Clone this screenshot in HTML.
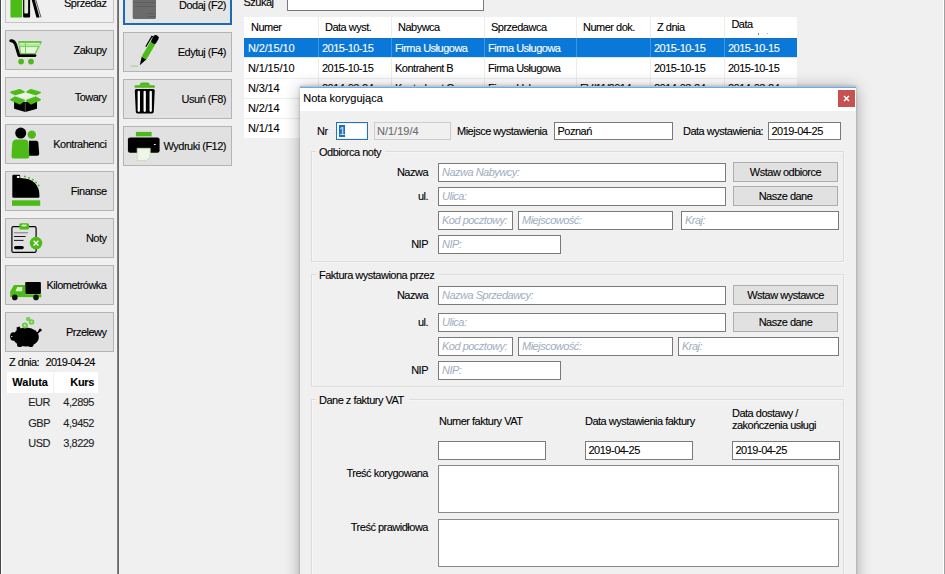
<!DOCTYPE html>
<html><head><meta charset="utf-8"><style>
html,body{margin:0;padding:0;}
body{width:945px;height:574px;overflow:hidden;position:relative;background:#f0f0f0;font-family:"Liberation Sans",sans-serif;}
.t{position:absolute;white-space:nowrap;-webkit-text-stroke:0.1px currentColor;}
.r{position:absolute;box-sizing:border-box;}
.ic{position:absolute;left:0;top:0;overflow:visible;}
</style></head><body>
<div class="r" style="left:0px;top:0px;width:1px;height:574px;background:#46494f;"></div>
<div class="r" style="left:1px;top:0px;width:1px;height:574px;background:#ffffff;"></div>
<div class="r" style="left:943px;top:0px;width:1px;height:574px;background:#ffffff;"></div>
<div class="r" style="left:944px;top:0px;width:1px;height:574px;background:#a0a0a0;"></div>
<div class="r" style="left:117px;top:0px;width:1px;height:574px;background:#7e7e7e;"></div>
<div class="r" style="left:118px;top:0px;width:1px;height:574px;background:#6a6a6a;"></div>
<div class="r" style="left:5px;top:-17px;width:109px;height:40px;background:#efefef;border:1px solid #c4c4c4;"></div>
<div class="t" style="top:-1.61px;font-size:11px;line-height:11px;letter-spacing:-0.5px;color:#000;right:838.5px;text-align:right;">Sprzedaż</div>
<div class="r" style="left:5px;top:30px;width:109px;height:40px;background:#e1e1e1;border:1px solid #b4b4b4;"></div>
<div class="t" style="top:44.69px;font-size:11px;line-height:11px;letter-spacing:-0.5px;color:#000;right:838.5px;text-align:right;">Zakupy</div>
<div class="r" style="left:5px;top:77px;width:109px;height:40px;background:#e1e1e1;border:1px solid #b4b4b4;"></div>
<div class="t" style="top:91.69px;font-size:11px;line-height:11px;letter-spacing:-0.5px;color:#000;right:838.5px;text-align:right;">Towary</div>
<div class="r" style="left:5px;top:124px;width:109px;height:40px;background:#e1e1e1;border:1px solid #b4b4b4;"></div>
<div class="t" style="top:138.69px;font-size:11px;line-height:11px;letter-spacing:-0.5px;color:#000;right:838.5px;text-align:right;">Kontrahenci</div>
<div class="r" style="left:5px;top:171px;width:109px;height:40px;background:#e1e1e1;border:1px solid #b4b4b4;"></div>
<div class="t" style="top:185.69px;font-size:11px;line-height:11px;letter-spacing:-0.5px;color:#000;right:838.5px;text-align:right;">Finanse</div>
<div class="r" style="left:5px;top:218px;width:109px;height:40px;background:#e1e1e1;border:1px solid #b4b4b4;"></div>
<div class="t" style="top:232.69px;font-size:11px;line-height:11px;letter-spacing:-0.5px;color:#000;right:838.5px;text-align:right;">Noty</div>
<div class="r" style="left:5px;top:265px;width:109px;height:40px;background:#e1e1e1;border:1px solid #b4b4b4;"></div>
<div class="t" style="top:279.69px;font-size:11px;line-height:11px;letter-spacing:-0.5px;color:#000;right:838.5px;text-align:right;">Kilometrówka</div>
<div class="r" style="left:5px;top:312px;width:109px;height:40px;background:#e1e1e1;border:1px solid #b4b4b4;"></div>
<div class="t" style="top:326.69px;font-size:11px;line-height:11px;letter-spacing:-0.5px;color:#000;right:838.5px;text-align:right;">Przelewy</div>
<div class="r" style="left:123px;top:-16px;width:109px;height:41px;background:#e5e5e5;border:1px solid #2568ad;border-width:2px;box-shadow:inset 0 0 0 1px #cfe8fb;"></div>
<div class="t" style="top:-0.31px;font-size:11px;line-height:11px;letter-spacing:-0.5px;color:#000;right:719px;text-align:right;">Dodaj (F2)</div>
<div class="r" style="left:123px;top:32px;width:109px;height:40px;background:#e1e1e1;border:1px solid #b4b4b4;"></div>
<div class="t" style="top:46.69px;font-size:11px;line-height:11px;letter-spacing:-0.5px;color:#000;right:719px;text-align:right;">Edytuj (F4)</div>
<div class="r" style="left:123px;top:79px;width:109px;height:40px;background:#e1e1e1;border:1px solid #b4b4b4;"></div>
<div class="t" style="top:93.69px;font-size:11px;line-height:11px;letter-spacing:-0.5px;color:#000;right:719px;text-align:right;">Usuń (F8)</div>
<div class="r" style="left:123px;top:126px;width:109px;height:40px;background:#e1e1e1;border:1px solid #b4b4b4;"></div>
<div class="t" style="top:140.69px;font-size:11px;line-height:11px;letter-spacing:-0.5px;color:#000;right:719px;text-align:right;">Wydruki (F12)</div>
<div class="t" style="top:356.69px;font-size:11px;line-height:11px;letter-spacing:-0.5px;color:#000;left:9px;">Z dnia:</div>
<div class="t" style="top:356.69px;font-size:11px;line-height:11px;letter-spacing:-0.7px;color:#000;left:45.5px;">2019-04-24</div>
<div class="r" style="left:7px;top:372px;width:91px;height:21px;background:#ffffff;"></div>
<div class="r" style="left:53px;top:372px;width:1px;height:21px;background:#f0f0f0;"></div>
<div class="t" style="top:377.19px;font-size:11px;line-height:11px;letter-spacing:0px;color:#000;font-weight:bold;left:12.3px;">Waluta</div>
<div class="t" style="top:377.19px;font-size:11px;line-height:11px;letter-spacing:-0.35px;color:#000;font-weight:bold;right:851px;text-align:right;">Kurs</div>
<div class="t" style="top:397.29px;font-size:11px;line-height:11px;letter-spacing:-0.5px;color:#222;right:895px;text-align:right;">EUR</div>
<div class="t" style="top:397.29px;font-size:11px;line-height:11px;letter-spacing:-0.5px;color:#222;right:851px;text-align:right;">4,2895</div>
<div class="t" style="top:417.59px;font-size:11px;line-height:11px;letter-spacing:-0.5px;color:#222;right:895px;text-align:right;">GBP</div>
<div class="t" style="top:417.59px;font-size:11px;line-height:11px;letter-spacing:-0.5px;color:#222;right:851px;text-align:right;">4,9452</div>
<div class="t" style="top:437.89px;font-size:11px;line-height:11px;letter-spacing:-0.5px;color:#222;right:895px;text-align:right;">USD</div>
<div class="t" style="top:437.89px;font-size:11px;line-height:11px;letter-spacing:-0.5px;color:#222;right:851px;text-align:right;">3,8229</div>
<div class="t" style="top:-3.51px;font-size:11px;line-height:11px;letter-spacing:-0.5px;color:#000;left:243.5px;">Szukaj</div>
<div class="r" style="left:287px;top:-10px;width:197px;height:21px;background:#ffffff;border:1px solid #7a7a7a;"></div>
<div class="r" style="left:244px;top:17px;width:553px;height:121px;background:#ffffff;"></div>
<div class="r" style="left:244px;top:38px;width:553px;height:19px;background:#0a78d8;"></div>
<div class="r" style="left:244px;top:38px;width:553px;height:1px;background:#1a6fc0;"></div>
<div class="r" style="left:244px;top:57px;width:553px;height:1px;background:#d6eafb;"></div>
<div class="r" style="left:244px;top:78px;width:553px;height:1px;background:#ececec;"></div>
<div class="r" style="left:244px;top:98px;width:553px;height:1px;background:#ececec;"></div>
<div class="r" style="left:244px;top:118px;width:553px;height:1px;background:#ececec;"></div>
<div class="r" style="left:318px;top:17px;width:1px;height:121px;background:#ececec;"></div>
<div class="r" style="left:318px;top:38px;width:1px;height:19px;background:#3d96e0;"></div>
<div class="r" style="left:391px;top:17px;width:1px;height:121px;background:#ececec;"></div>
<div class="r" style="left:391px;top:38px;width:1px;height:19px;background:#3d96e0;"></div>
<div class="r" style="left:484px;top:17px;width:1px;height:121px;background:#ececec;"></div>
<div class="r" style="left:484px;top:38px;width:1px;height:19px;background:#3d96e0;"></div>
<div class="r" style="left:576px;top:17px;width:1px;height:121px;background:#ececec;"></div>
<div class="r" style="left:576px;top:38px;width:1px;height:19px;background:#3d96e0;"></div>
<div class="r" style="left:650px;top:17px;width:1px;height:121px;background:#ececec;"></div>
<div class="r" style="left:650px;top:38px;width:1px;height:19px;background:#3d96e0;"></div>
<div class="r" style="left:724px;top:17px;width:1px;height:121px;background:#ececec;"></div>
<div class="r" style="left:724px;top:38px;width:1px;height:19px;background:#3d96e0;"></div>
<div class="t" style="top:21.89px;font-size:11px;line-height:11px;letter-spacing:-0.5px;color:#000;left:251px;">Numer</div>
<div class="t" style="top:21.89px;font-size:11px;line-height:11px;letter-spacing:-0.5px;color:#000;left:325px;">Data wyst.</div>
<div class="t" style="top:21.89px;font-size:11px;line-height:11px;letter-spacing:-0.5px;color:#000;left:398px;">Nabywca</div>
<div class="t" style="top:21.89px;font-size:11px;line-height:11px;letter-spacing:-0.5px;color:#000;left:491px;">Sprzedawca</div>
<div class="t" style="top:21.89px;font-size:11px;line-height:11px;letter-spacing:-0.5px;color:#000;left:583px;">Numer dok.</div>
<div class="t" style="top:21.89px;font-size:11px;line-height:11px;letter-spacing:-0.5px;color:#000;left:657px;">Z dnia</div>
<div class="t" style="top:19.29px;font-size:11px;line-height:11px;letter-spacing:-0.5px;color:#000;left:731.4px;">Data</div>
<div class="r" style="left:758px;top:33px;width:1px;height:2px;background:#888888;"></div>
<div class="r" style="left:767px;top:33px;width:1px;height:1px;background:#aaaaaa;"></div>
<div class="t" style="top:42.59px;font-size:11px;line-height:11px;letter-spacing:-0.15px;color:#ffffff;left:248px;">N/2/15/10</div>
<div class="t" style="top:42.59px;font-size:11px;line-height:11px;letter-spacing:-0.5px;color:#ffffff;left:322px;">2015-10-15</div>
<div class="t" style="top:42.59px;font-size:11px;line-height:11px;letter-spacing:-0.5px;color:#ffffff;left:395px;">Firma Usługowa</div>
<div class="t" style="top:42.59px;font-size:11px;line-height:11px;letter-spacing:-0.5px;color:#ffffff;left:488px;">Firma Usługowa</div>
<div class="t" style="top:42.59px;font-size:11px;line-height:11px;letter-spacing:-0.5px;color:#ffffff;left:654px;">2015-10-15</div>
<div class="t" style="top:42.59px;font-size:11px;line-height:11px;letter-spacing:-0.5px;color:#ffffff;left:728px;">2015-10-15</div>
<div class="t" style="top:62.79px;font-size:11px;line-height:11px;letter-spacing:-0.15px;color:#000;left:248px;">N/1/15/10</div>
<div class="t" style="top:62.79px;font-size:11px;line-height:11px;letter-spacing:-0.5px;color:#000;left:322px;">2015-10-15</div>
<div class="t" style="top:62.79px;font-size:11px;line-height:11px;letter-spacing:-0.5px;color:#000;left:395px;">Kontrahent B</div>
<div class="t" style="top:62.79px;font-size:11px;line-height:11px;letter-spacing:-0.5px;color:#000;left:488px;">Firma Usługowa</div>
<div class="t" style="top:62.79px;font-size:11px;line-height:11px;letter-spacing:-0.5px;color:#000;left:654px;">2015-10-15</div>
<div class="t" style="top:62.79px;font-size:11px;line-height:11px;letter-spacing:-0.5px;color:#000;left:728px;">2015-10-15</div>
<div class="t" style="top:82.99px;font-size:11px;line-height:11px;letter-spacing:-0.15px;color:#000;left:248px;">N/3/14</div>
<div class="t" style="top:82.99px;font-size:11px;line-height:11px;letter-spacing:-0.5px;color:#000;left:322px;">2014-03-24</div>
<div class="t" style="top:82.99px;font-size:11px;line-height:11px;letter-spacing:-0.5px;color:#000;left:395px;">Kontrahent C</div>
<div class="t" style="top:82.99px;font-size:11px;line-height:11px;letter-spacing:-0.5px;color:#000;left:488px;">Firma Usługowa</div>
<div class="t" style="top:82.99px;font-size:11px;line-height:11px;letter-spacing:-0.5px;color:#000;left:580px;">FV/11/2014</div>
<div class="t" style="top:82.99px;font-size:11px;line-height:11px;letter-spacing:-0.5px;color:#000;left:654px;">2014-03-24</div>
<div class="t" style="top:82.99px;font-size:11px;line-height:11px;letter-spacing:-0.5px;color:#000;left:728px;">2014-03-24</div>
<div class="t" style="top:103.19px;font-size:11px;line-height:11px;letter-spacing:-0.15px;color:#000;left:248px;">N/2/14</div>
<div class="t" style="top:103.19px;font-size:11px;line-height:11px;letter-spacing:-0.5px;color:#000;left:322px;">2014-03-24</div>
<div class="t" style="top:103.19px;font-size:11px;line-height:11px;letter-spacing:-0.5px;color:#000;left:395px;">Kontrahent C</div>
<div class="t" style="top:103.19px;font-size:11px;line-height:11px;letter-spacing:-0.5px;color:#000;left:488px;">Firma Usługowa</div>
<div class="t" style="top:103.19px;font-size:11px;line-height:11px;letter-spacing:-0.5px;color:#000;left:580px;">FV/11/2014</div>
<div class="t" style="top:103.19px;font-size:11px;line-height:11px;letter-spacing:-0.5px;color:#000;left:654px;">2014-03-24</div>
<div class="t" style="top:103.19px;font-size:11px;line-height:11px;letter-spacing:-0.5px;color:#000;left:728px;">2014-03-24</div>
<div class="t" style="top:123.39px;font-size:11px;line-height:11px;letter-spacing:-0.15px;color:#000;left:248px;">N/1/14</div>
<div class="t" style="top:123.39px;font-size:11px;line-height:11px;letter-spacing:-0.5px;color:#000;left:322px;">2014-03-24</div>
<div class="t" style="top:123.39px;font-size:11px;line-height:11px;letter-spacing:-0.5px;color:#000;left:395px;">Kontrahent C</div>
<div class="t" style="top:123.39px;font-size:11px;line-height:11px;letter-spacing:-0.5px;color:#000;left:488px;">Firma Usługowa</div>
<div class="t" style="top:123.39px;font-size:11px;line-height:11px;letter-spacing:-0.5px;color:#000;left:580px;">FV/11/2014</div>
<div class="t" style="top:123.39px;font-size:11px;line-height:11px;letter-spacing:-0.5px;color:#000;left:654px;">2014-03-24</div>
<div class="t" style="top:123.39px;font-size:11px;line-height:11px;letter-spacing:-0.5px;color:#000;left:728px;">2014-03-24</div>
<svg class="ic" width="945" height="574" viewBox="0 0 945 574"><rect x="10.4" y="-5" width="11.8" height="22.4" rx="1.2" fill="#4cbb17"/><rect x="23.1" y="-5" width="7" height="22.4" rx="1" fill="#000"/><rect x="24.3" y="-5" width="3.8" height="18.5" rx="1" fill="#dcefd6"/><polygon points="31.5,-1 34.5,-1 39.6,17.4 36.4,17.4" fill="#000"/><line x1="35.8" y1="0" x2="41" y2="17.4" stroke="#333" stroke-width="0.8"/><polygon points="18.8,42 41.2,42 35.2,53.6 20.6,53.6" fill="#e6f6dc" stroke="#6fcc4c" stroke-width="1.3" stroke-linejoin="round"/><line x1="18.6" y1="41.9" x2="41.3" y2="41.9" stroke="#62c43e" stroke-width="1.6"/><rect x="19.4" y="43.6" width="21" height="2.6" fill="#b4e8a0"/><line x1="19.4" y1="46.6" x2="39.2" y2="46.6" stroke="#6fcc4c" stroke-width="0.9"/><line x1="25.5" y1="42.5" x2="25.5" y2="53.2" stroke="#6fcc4c" stroke-width="0.9"/><path d="M10.8,40.8 Q14.2,40.5 15.6,44.5 L19,55.6 L35,55.6" fill="none" stroke="#000" stroke-width="2.9" stroke-linecap="round" stroke-linejoin="round"/><circle cx="21.1" cy="61.6" r="2.9" fill="#4cbb17"/><circle cx="31" cy="61.6" r="2.9" fill="#4cbb17"/><polygon points="15.1,95 25.3,92.2 35.8,95 25.3,99" fill="#e6f5de"/><polygon points="14.1,100 25.3,102 37,100 37,108.8 25.3,112 14.1,108.8" fill="#000"/><polygon points="10.9,92.3 19.7,89.8 24,91.9 15.2,94.5" fill="#4cbb17" stroke="#4cbb17" stroke-width="1.6" stroke-linejoin="round"/><polygon points="27.1,91.9 30.9,89.8 40.1,92.5 35.7,94.5" fill="#4cbb17" stroke="#4cbb17" stroke-width="1.6" stroke-linejoin="round"/><polygon points="10.9,99.7 15.2,97.3 24.3,100.4 20,103.7" fill="#4cbb17" stroke="#4cbb17" stroke-width="1.6" stroke-linejoin="round"/><polygon points="26.9,100.4 35.7,97.3 40.1,99.7 30.9,103.7" fill="#4cbb17" stroke="#4cbb17" stroke-width="1.6" stroke-linejoin="round"/><line x1="25.3" y1="102.6" x2="25.3" y2="112" stroke="#888" stroke-width="0.6"/><circle cx="20.7" cy="133.1" r="5.5" fill="#000"/><circle cx="31.8" cy="134.6" r="4.2" fill="#4cbb17"/><path d="M29,140.7 L36.5,140.7 Q38,140.7 38.3,142.5 L39.2,153.5 Q39.3,155.7 37.3,155.7 L29,155.7 Z" fill="#000"/><path d="M16.5,139.6 L24.5,139.6 Q28.3,139.6 28.6,143.5 L29.3,156 Q29.4,158.5 27,158.5 L13.8,158.5 Q11.4,158.5 11.5,156 L12.2,143.5 Q12.6,139.6 16.5,139.6 Z" fill="#4cbb17"/><path d="M13.5,174.8 L19,174.8 Q20.2,174.8 20.2,176 L20.2,178 Q39.5,178.5 39.5,196.4 Q39.5,197.8 38.2,197.8 L13.6,197.8 Q12.3,197.8 12.3,196.5 L12.3,176 Q12.3,174.8 13.5,174.8 Z" fill="#000"/><rect x="16.8" y="175.9" width="2.8" height="2.2" rx="0.8" fill="#fff"/><circle cx="24.9" cy="176.6" r="1" fill="#4cbb17"/><circle cx="29" cy="177.9" r="1" fill="#4cbb17"/><circle cx="32.8" cy="179.8" r="1" fill="#4cbb17"/><circle cx="36" cy="182.4" r="1" fill="#4cbb17"/><circle cx="38.6" cy="185.6" r="1" fill="#4cbb17"/><rect x="12" y="200.3" width="28.2" height="5.5" fill="#4cbb17"/><rect x="11.9" y="226.6" width="24.2" height="25.8" rx="1.5" fill="none" stroke="#000" stroke-width="1.2"/><rect x="19.3" y="223.2" width="9.7" height="6.3" rx="1.6" fill="#4cbb17"/><rect x="21.5" y="224.6" width="5.2" height="1.8" rx="0.9" fill="#c9f0b8"/><line x1="14" y1="232.8" x2="28" y2="232.8" stroke="#7a7a7a" stroke-width="1"/><line x1="14" y1="236.5" x2="25.6" y2="236.5" stroke="#000" stroke-width="0.9"/><line x1="14" y1="240.4" x2="23.5" y2="240.4" stroke="#000" stroke-width="0.9"/><rect x="14" y="246" width="9.8" height="3.2" rx="1.6" fill="#000"/><circle cx="36" cy="243.1" r="6.3" fill="#4cbb17"/><path d="M33.6,240.7 L38.4,245.5 M38.4,240.7 L33.6,245.5" stroke="#fff" stroke-width="1.4"/><rect x="25.2" y="282" width="15.7" height="11.9" rx="1" fill="#000"/><path d="M10.2,297 L10.2,291.5 L14,285 L25.2,285 L25.2,294.2 L41.3,294.2 L41.3,297.2 Z" fill="#4cbb17"/><polygon points="15.5,291.2 17.2,287 22.2,287 22.2,291.2" fill="#d5f1c8"/><circle cx="14.8" cy="297.4" r="2.8" fill="#111"/><circle cx="36" cy="297.4" r="2.8" fill="#111"/><ellipse cx="26" cy="337" rx="12.8" ry="9.6" fill="#000"/><ellipse cx="13.5" cy="336.5" rx="3.4" ry="4.2" fill="#000"/><polygon points="16.5,327.5 19.5,326.5 21.5,330 17,332" fill="#000"/><rect x="17" y="342" width="5.5" height="5" rx="2" fill="#000"/><rect x="28" y="342" width="5.5" height="5" rx="2" fill="#000"/><path d="M37.5,333 Q39.5,332 40,329.5" fill="none" stroke="#000" stroke-width="1.6" stroke-linecap="round"/><circle cx="40.2" cy="330.2" r="1.4" fill="#000"/><circle cx="11.8" cy="336.6" r="0.7" fill="#fff"/><circle cx="28.2" cy="319" r="2.3" fill="#78d058"/><circle cx="31.5" cy="322" r="2.8" fill="#6cc948"/><circle cx="24.9" cy="325.4" r="3" fill="#6cc948"/><circle cx="31.5" cy="322" r="1.2" fill="#a8e890"/><circle cx="24.9" cy="325.4" r="1.2" fill="#a8e890"/><rect x="132.7" y="-8" width="23.3" height="27" rx="1.5" fill="#6b6b6b"/><line x1="134" y1="2.5" x2="155" y2="2.5" stroke="#5a5a5a" stroke-width="0.8"/><line x1="134" y1="6.5" x2="155" y2="6.5" stroke="#5a5a5a" stroke-width="0.8"/><line x1="147.5" y1="13.5" x2="155" y2="13.5" stroke="#555" stroke-width="0.8"/><line x1="147.5" y1="16.5" x2="155" y2="16.5" stroke="#555" stroke-width="0.8"/><line x1="130.7" y1="66.1" x2="138" y2="66.1" stroke="#8fd870" stroke-width="1"/><g transform="translate(139.8,65.2) rotate(-59.5)"><polygon points="0,0 8.5,-2.7 8.5,2.7" fill="#000"/><rect x="8" y="-2.8" width="18.5" height="5.6" rx="1.5" fill="#4cbb17"/><rect x="25.5" y="-2.8" width="8.8" height="5.6" rx="2.2" fill="#000"/><path d="M19.5,-4.2 L31,-4.2 L31,-2.5" fill="none" stroke="#000" stroke-width="1.3" stroke-linecap="round"/></g><rect x="134.5" y="85.3" width="20.5" height="2.5" rx="1.2" fill="#4cbb17"/><path d="M139.5,85.6 Q140,82.5 142,82.5 L147.5,82.5 Q149.5,82.5 150,85.6 Z" fill="#4cbb17"/><path d="M136.3,89.1 L153.2,89.1 Q154.8,89.1 154.7,90.8 L153.8,111.8 Q153.7,113.5 152,113.5 L137.5,113.5 Q135.9,113.5 135.8,111.8 L134.8,90.8 Q134.8,89.1 136.3,89.1 Z" fill="#000"/><line x1="138.8" y1="92" x2="138.8" y2="110.8" stroke="#fff" stroke-width="2.3" stroke-linecap="round"/><line x1="144.7" y1="92" x2="144.7" y2="110.8" stroke="#fff" stroke-width="2.3" stroke-linecap="round"/><line x1="150.7" y1="92" x2="150.7" y2="110.8" stroke="#fff" stroke-width="2.3" stroke-linecap="round"/><rect x="135.9" y="131.9" width="15.7" height="4.4" fill="#4cbb17"/><rect x="127.9" y="137.4" width="31.7" height="15.4" rx="2.2" fill="#000"/><rect x="153.8" y="143.9" width="2" height="1.2" rx="0.6" fill="#fff"/><path d="M137.2,148.3 L150.2,148.3 L150.2,156.8 L146.5,160.5 L137.2,160.5 Z" fill="#eef6ea" stroke="#bfe0b0" stroke-width="0.8"/></svg>
<div class="r" style="left:300px;top:86px;width:556px;height:520px;box-shadow:0 0 3px rgba(0,0,0,0.2), 0 2px 15px rgba(0,0,0,0.32);"></div>
<div class="r" style="left:300px;top:86px;width:556px;height:515px;background:#f0f0f0;"></div>
<div class="r" style="left:300px;top:86px;width:556px;height:1px;background:#a6c6e8;"></div>
<div class="r" style="left:300px;top:87px;width:556px;height:1px;background:#7aa7d6;"></div>
<div class="r" style="left:300px;top:88px;width:556px;height:23px;background:#ffffff;"></div>
<div class="t" style="top:93.09px;font-size:11px;line-height:11px;letter-spacing:0px;color:#000;left:303.3px;">Nota korygująca</div>
<div class="r" style="left:838px;top:90px;width:17px;height:17px;background:#c75050;"></div>
<svg class="ic" style="left:838px;top:90px" width="18" height="18"><path d="M6,6 L11,11 M11,6 L6,11" stroke="#fff" stroke-width="1.5"/></svg>
<div class="t" style="top:125.99px;font-size:11px;line-height:11px;letter-spacing:-0.5px;color:#000;left:317px;">Nr</div>
<div class="r" style="left:336px;top:122px;width:32px;height:18px;background:#ffffff;border:1px solid #2f70b0;box-shadow:inset 0 0 0 1px #e4f4ff;"></div>
<div class="r" style="left:339px;top:125px;width:6px;height:12px;background:#1e6ec2;"></div>
<div class="t" style="top:125.99px;font-size:11px;line-height:11px;letter-spacing:0px;color:#cfe8ff;left:339.3px;">1</div>
<div class="r" style="left:374px;top:122px;width:77px;height:18px;background:#f0f0f0;border:1px solid #cccccc;"></div>
<div class="t" style="top:125.99px;font-size:11px;line-height:11px;letter-spacing:0px;color:#6d6d6d;left:377px;">N/1/19/4</div>
<div class="t" style="top:125.99px;font-size:11px;line-height:11px;letter-spacing:-0.5px;color:#000;left:457px;">Miejsce wystawienia</div>
<div class="r" style="left:554px;top:122px;width:119px;height:18px;background:#ffffff;border:1px solid #7a7a7a;"></div>
<div class="t" style="top:125.99px;font-size:11px;line-height:11px;letter-spacing:-0.5px;color:#000;left:557.5px;">Poznań</div>
<div class="t" style="top:125.99px;font-size:11px;line-height:11px;letter-spacing:-0.5px;color:#000;left:683px;">Data wystawienia:</div>
<div class="r" style="left:768px;top:122px;width:73px;height:18px;background:#ffffff;border:1px solid #7a7a7a;"></div>
<div class="t" style="top:125.99px;font-size:11px;line-height:11px;letter-spacing:-0.5px;color:#000;left:771.5px;">2019-04-25</div>
<div class="r" style="left:312px;top:152px;width:533px;height:111px;border:1px solid #f6f6f6;"></div>
<div class="r" style="left:311px;top:151px;width:533px;height:111px;border:1px solid #dcdcdc;"></div>
<div class="r" style="left:316px;top:148px;width:69px;height:7px;background:#f0f0f0;"></div>
<div class="t" style="top:146.69px;font-size:11px;line-height:11px;letter-spacing:-0.5px;color:#000;left:319px;">Odbiorca noty</div>
<div class="t" style="top:167.19px;font-size:11px;line-height:11px;letter-spacing:-0.5px;color:#000;right:517px;text-align:right;">Nazwa</div>
<div class="r" style="left:438px;top:163px;width:288px;height:19px;background:#ffffff;border:1px solid #7a7a7a;"></div>
<div class="t" style="top:166.99px;font-size:11px;line-height:11px;letter-spacing:-0.5px;color:#9eadc0;font-style:italic;left:442px;-webkit-text-stroke:0;">Nazwa Nabywcy:</div>
<div class="r" style="left:733px;top:162px;width:105px;height:20px;background:#e1e1e1;border:1px solid #adadad;"></div>
<div class="t" style="top:166.89px;left:733px;width:105px;text-align:center;font-size:11px;line-height:11px;letter-spacing:-0.5px;color:#000;">Wstaw odbiorce</div>
<div class="t" style="top:191.19px;font-size:11px;line-height:11px;letter-spacing:-0.5px;color:#000;right:517px;text-align:right;">ul.</div>
<div class="r" style="left:438px;top:187px;width:288px;height:19px;background:#ffffff;border:1px solid #7a7a7a;"></div>
<div class="t" style="top:190.99px;font-size:11px;line-height:11px;letter-spacing:-0.5px;color:#9eadc0;font-style:italic;left:442px;-webkit-text-stroke:0;">Ulica:</div>
<div class="r" style="left:733px;top:186px;width:105px;height:20px;background:#e1e1e1;border:1px solid #adadad;"></div>
<div class="t" style="top:190.89px;left:733px;width:105px;text-align:center;font-size:11px;line-height:11px;letter-spacing:-0.5px;color:#000;">Nasze dane</div>
<div class="r" style="left:438px;top:211px;width:75px;height:19px;background:#ffffff;border:1px solid #7a7a7a;"></div>
<div class="t" style="top:214.99px;font-size:11px;line-height:11px;letter-spacing:-0.5px;color:#9eadc0;font-style:italic;left:442px;-webkit-text-stroke:0;">Kod pocztowy:</div>
<div class="r" style="left:518px;top:211px;width:155px;height:19px;background:#ffffff;border:1px solid #7a7a7a;"></div>
<div class="t" style="top:214.99px;font-size:11px;line-height:11px;letter-spacing:-0.5px;color:#9eadc0;font-style:italic;left:522px;-webkit-text-stroke:0;">Miejscowość:</div>
<div class="r" style="left:681px;top:211px;width:158px;height:19px;background:#ffffff;border:1px solid #7a7a7a;"></div>
<div class="t" style="top:214.99px;font-size:11px;line-height:11px;letter-spacing:-0.5px;color:#9eadc0;font-style:italic;left:685px;-webkit-text-stroke:0;">Kraj:</div>
<div class="t" style="top:239.19px;font-size:11px;line-height:11px;letter-spacing:-0.5px;color:#000;right:517px;text-align:right;">NIP</div>
<div class="r" style="left:438px;top:235px;width:123px;height:19px;background:#ffffff;border:1px solid #7a7a7a;"></div>
<div class="t" style="top:238.99px;font-size:11px;line-height:11px;letter-spacing:-0.5px;color:#9eadc0;font-style:italic;left:442px;-webkit-text-stroke:0;">NIP:</div>
<div class="r" style="left:312px;top:275px;width:533px;height:113px;border:1px solid #f6f6f6;"></div>
<div class="r" style="left:311px;top:274px;width:533px;height:113px;border:1px solid #dcdcdc;"></div>
<div class="r" style="left:316px;top:271px;width:123px;height:7px;background:#f0f0f0;"></div>
<div class="t" style="top:269.69px;font-size:11px;line-height:11px;letter-spacing:-0.5px;color:#000;left:319px;">Faktura wystawiona przez</div>
<div class="t" style="top:290.19px;font-size:11px;line-height:11px;letter-spacing:-0.5px;color:#000;right:517px;text-align:right;">Nazwa</div>
<div class="r" style="left:438px;top:286px;width:288px;height:19px;background:#ffffff;border:1px solid #7a7a7a;"></div>
<div class="t" style="top:289.99px;font-size:11px;line-height:11px;letter-spacing:-0.5px;color:#9eadc0;font-style:italic;left:442px;-webkit-text-stroke:0;">Nazwa Sprzedawcy:</div>
<div class="r" style="left:733px;top:285px;width:105px;height:20px;background:#e1e1e1;border:1px solid #adadad;"></div>
<div class="t" style="top:289.89px;left:733px;width:105px;text-align:center;font-size:11px;line-height:11px;letter-spacing:-0.5px;color:#000;">Wstaw wystawce</div>
<div class="t" style="top:317.19px;font-size:11px;line-height:11px;letter-spacing:-0.5px;color:#000;right:517px;text-align:right;">ul.</div>
<div class="r" style="left:438px;top:313px;width:288px;height:19px;background:#ffffff;border:1px solid #7a7a7a;"></div>
<div class="t" style="top:316.99px;font-size:11px;line-height:11px;letter-spacing:-0.5px;color:#9eadc0;font-style:italic;left:442px;-webkit-text-stroke:0;">Ulica:</div>
<div class="r" style="left:733px;top:312px;width:105px;height:20px;background:#e1e1e1;border:1px solid #adadad;"></div>
<div class="t" style="top:316.89px;left:733px;width:105px;text-align:center;font-size:11px;line-height:11px;letter-spacing:-0.5px;color:#000;">Nasze dane</div>
<div class="r" style="left:438px;top:337px;width:75px;height:19px;background:#ffffff;border:1px solid #7a7a7a;"></div>
<div class="t" style="top:340.99px;font-size:11px;line-height:11px;letter-spacing:-0.5px;color:#9eadc0;font-style:italic;left:442px;-webkit-text-stroke:0;">Kod pocztowy:</div>
<div class="r" style="left:518px;top:337px;width:155px;height:19px;background:#ffffff;border:1px solid #7a7a7a;"></div>
<div class="t" style="top:340.99px;font-size:11px;line-height:11px;letter-spacing:-0.5px;color:#9eadc0;font-style:italic;left:522px;-webkit-text-stroke:0;">Miejscowość:</div>
<div class="r" style="left:678px;top:337px;width:161px;height:19px;background:#ffffff;border:1px solid #7a7a7a;"></div>
<div class="t" style="top:340.99px;font-size:11px;line-height:11px;letter-spacing:-0.5px;color:#9eadc0;font-style:italic;left:682px;-webkit-text-stroke:0;">Kraj:</div>
<div class="t" style="top:365.19px;font-size:11px;line-height:11px;letter-spacing:-0.5px;color:#000;right:517px;text-align:right;">NIP</div>
<div class="r" style="left:438px;top:361px;width:123px;height:19px;background:#ffffff;border:1px solid #7a7a7a;"></div>
<div class="t" style="top:364.99px;font-size:11px;line-height:11px;letter-spacing:-0.5px;color:#9eadc0;font-style:italic;left:442px;-webkit-text-stroke:0;">NIP:</div>
<div class="r" style="left:312px;top:400px;width:533px;height:302px;border:1px solid #f6f6f6;"></div>
<div class="r" style="left:311px;top:399px;width:533px;height:302px;border:1px solid #dcdcdc;"></div>
<div class="r" style="left:316px;top:396px;width:93px;height:7px;background:#f0f0f0;"></div>
<div class="t" style="top:394.69px;font-size:11px;line-height:11px;letter-spacing:-0.5px;color:#000;left:319px;">Dane z faktury VAT</div>
<div class="t" style="top:416.39px;font-size:11px;line-height:11px;letter-spacing:-0.5px;color:#000;left:439px;">Numer faktury VAT</div>
<div class="t" style="top:416.39px;font-size:11px;line-height:11px;letter-spacing:-0.5px;color:#000;left:585px;">Data wystawienia faktury</div>
<div class="t" style="top:408.49px;font-size:11px;line-height:11px;letter-spacing:-0.5px;color:#000;left:732px;">Data dostawy /</div>
<div class="t" style="top:420.49px;font-size:11px;line-height:11px;letter-spacing:-0.5px;color:#000;left:732px;">zakończenia usługi</div>
<div class="r" style="left:438px;top:441px;width:108px;height:19px;background:#ffffff;border:1px solid #7a7a7a;"></div>
<div class="r" style="left:585px;top:441px;width:108px;height:19px;background:#ffffff;border:1px solid #7a7a7a;"></div>
<div class="t" style="top:445.19px;font-size:11px;line-height:11px;letter-spacing:-0.5px;color:#000;left:588.5px;">2019-04-25</div>
<div class="r" style="left:732px;top:441px;width:108px;height:19px;background:#ffffff;border:1px solid #7a7a7a;"></div>
<div class="t" style="top:445.19px;font-size:11px;line-height:11px;letter-spacing:-0.5px;color:#000;left:735.5px;">2019-04-25</div>
<div class="t" style="top:468.49px;font-size:11px;line-height:11px;letter-spacing:-0.5px;color:#000;right:517px;text-align:right;">Treść korygowana</div>
<div class="r" style="left:438px;top:465px;width:401px;height:48px;background:#ffffff;border:1px solid #8a8a8a;"></div>
<div class="t" style="top:521.89px;font-size:11px;line-height:11px;letter-spacing:-0.5px;color:#000;right:517px;text-align:right;">Treść prawidłowa</div>
<div class="r" style="left:438px;top:519px;width:401px;height:48px;background:#ffffff;border:1px solid #8a8a8a;"></div>
</body></html>
